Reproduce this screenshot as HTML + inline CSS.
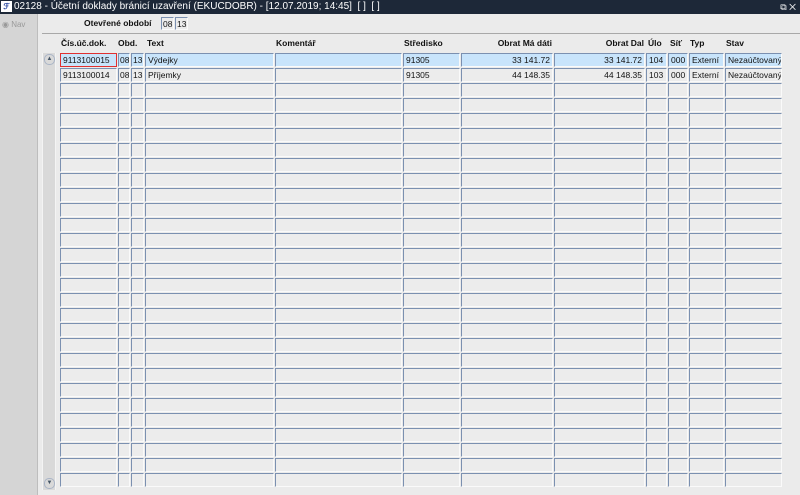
<!DOCTYPE html><html><head><meta charset="utf-8"><style>
body{margin:0;width:800px;height:495px;overflow:hidden;background:#ebebeb;font-family:"Liberation Sans",sans-serif;font-size:8.5px;color:#111;position:relative}
.t{position:absolute;left:0;top:0;width:800px;height:14px;background:#1d2838;color:#fff;font-size:10px;line-height:14px}
.lp{position:absolute;left:0;top:14px;width:37px;height:481px;background:#d5d5d5;border-right:1px solid #bdbdbd}
.hl{position:absolute;left:42px;top:33px;width:758px;height:1px;background:#a8a8a8}
.c{position:absolute;height:14px;box-sizing:border-box;border-top:1px solid #7b90b0;border-left:1px solid #7b90b0;border-right:1px solid #fafafa;border-bottom:1px solid #fafafa;background:#ececec;line-height:13px;padding:0 2px;white-space:nowrap;overflow:hidden}
.s{background:#c8e4fb}
.r{text-align:right}
.h{position:absolute;top:38px;font-weight:bold;font-size:8.5px}
.sb{position:absolute;left:42px;top:53px;width:12px;height:437px;background:#d9d9d9;border-left:1px solid #f4f4f4;border-right:1px solid #f4f4f4}
</style></head><body>
<div class="t"><span style="display:inline-block;width:11px;height:11px;background:#fff;color:#1a3a9a;font-size:8px;font-weight:bold;line-height:11px;text-align:center;margin:1px 2px 0 1px;vertical-align:top">ℱ</span>02128 - Účetní doklady bránicí uzavření (EKUCDOBR) - [12.07.2019; 14:45]&nbsp; [ ]&nbsp; [ ]<span style="position:absolute;right:4px;top:0;font-size:9px">⧉ ✕</span></div>
<div class="lp"><div style="position:absolute;left:2px;top:6px;color:#999;font-size:8px">◉ Nav</div></div>
<div class="hl"></div>
<div style="position:absolute;left:84px;top:18px;font-weight:bold;font-size:8.5px">Otevřené období</div>
<div class="c" style="left:161px;top:17px;width:13px;height:13px;line-height:12px;padding:0 1px">08</div>
<div class="c" style="left:175px;top:17px;width:13px;height:13px;line-height:12px;padding:0 1px">13</div>
<div class="h" style="left:61px">Čís.úč.dok.</div>
<div class="h" style="left:118px">Obd.</div>
<div class="h" style="left:147px">Text</div>
<div class="h" style="left:276px">Komentář</div>
<div class="h" style="left:404px">Středisko</div>
<div class="h" style="left:480px;width:72px;text-align:right">Obrat Má dáti</div>
<div class="h" style="left:580px;width:64px;text-align:right">Obrat Dal</div>
<div class="h" style="left:648px">Úlo</div>
<div class="h" style="left:670px">Síť</div>
<div class="h" style="left:690px">Typ</div>
<div class="h" style="left:726px">Stav</div>
<div class="sb"><div style="position:absolute;left:1px;top:1px;width:9px;height:9px;border:1px solid #a9b4c6;border-radius:5px;font-size:6px;line-height:9px;text-align:center;color:#456">▲</div><div style="position:absolute;left:1px;bottom:1px;width:9px;height:9px;border:1px solid #a9b4c6;border-radius:5px;font-size:6px;line-height:9px;text-align:center;color:#456">▼</div></div>
<div id="g"></div>
<div class="c s" style="left:60px;top:53px;width:57px;border:1px solid #e03030">9113100015</div>
<div class="c s" style="left:118px;top:53px;width:12px;padding:0 1px">08</div>
<div class="c s" style="left:131px;top:53px;width:13px;padding:0 1px">13</div>
<div class="c s" style="left:145px;top:53px;width:129px">Výdejky</div>
<div class="c s" style="left:275px;top:53px;width:127px"></div>
<div class="c s" style="left:403px;top:53px;width:57px">91305</div>
<div class="c s r" style="left:461px;top:53px;width:92px">33 141.72</div>
<div class="c s r" style="left:554px;top:53px;width:91px">33 141.72</div>
<div class="c s" style="left:646px;top:53px;width:21px">104</div>
<div class="c s" style="left:668px;top:53px;width:20px">000</div>
<div class="c s" style="left:689px;top:53px;width:35px">Externí</div>
<div class="c s" style="left:725px;top:53px;width:57px">Nezaúčtovaný</div>
<div class="c" style="left:60px;top:68px;width:57px">9113100014</div>
<div class="c" style="left:118px;top:68px;width:12px;padding:0 1px">08</div>
<div class="c" style="left:131px;top:68px;width:13px;padding:0 1px">13</div>
<div class="c" style="left:145px;top:68px;width:129px">Příjemky</div>
<div class="c" style="left:275px;top:68px;width:127px"></div>
<div class="c" style="left:403px;top:68px;width:57px">91305</div>
<div class="c r" style="left:461px;top:68px;width:92px">44 148.35</div>
<div class="c r" style="left:554px;top:68px;width:91px">44 148.35</div>
<div class="c" style="left:646px;top:68px;width:21px">103</div>
<div class="c" style="left:668px;top:68px;width:20px">000</div>
<div class="c" style="left:689px;top:68px;width:35px">Externí</div>
<div class="c" style="left:725px;top:68px;width:57px">Nezaúčtovaný</div>
<script>
var cols=[[60,57],[118,12],[131,13],[145,129],[275,127],[403,57],[461,92],[554,91],[646,21],[668,20],[689,35],[725,57]];
var h="";for(var r=2;r<29;r++){var y=53+r*15;for(var i=0;i<cols.length;i++)h+='<div class="c" style="left:'+cols[i][0]+'px;top:'+y+'px;width:'+cols[i][1]+'px"></div>';}
document.getElementById("g").innerHTML=h;
</script>
</body></html>
